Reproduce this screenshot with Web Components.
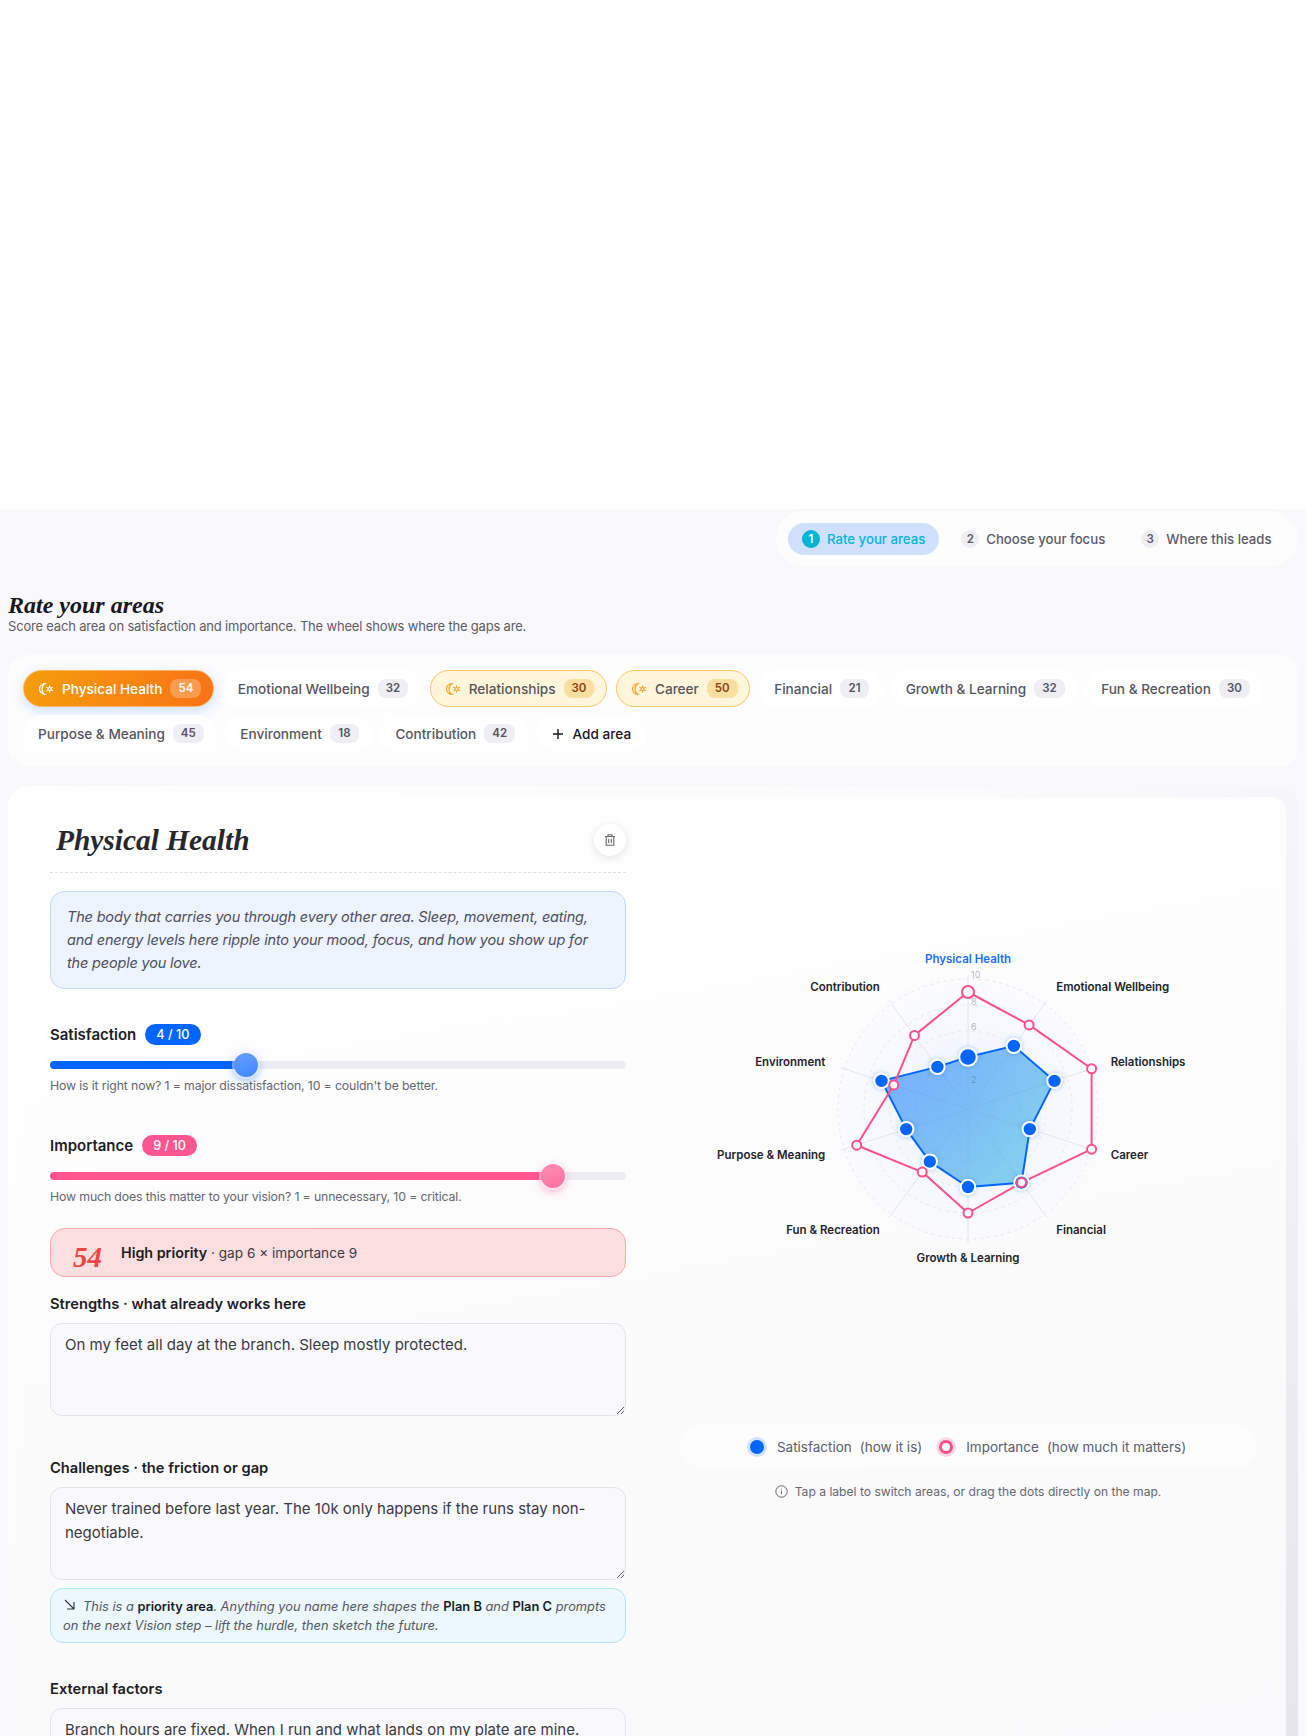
<!DOCTYPE html>
<html lang="en">
<head>
<meta charset="utf-8">
<title>Rate your areas</title>
<style>
  html, body { margin: 0; height: 1736px; overflow: hidden; background: #fff; }
  body { font-family: Inter, "Liberation Sans", sans-serif; color: #1f1f28; }
</style>
</head>
<body>
<rate-page>
  <step-bar>
    <step-item num="1" active>Rate your areas</step-item>
    <step-item num="2">Choose your focus</step-item>
    <step-item num="3">Where this leads</step-item>
  </step-bar>
  <page-heading heading="Rate your areas">Score each area on satisfaction and importance. The wheel shows where the gaps are.</page-heading>
  <chip-panel>
    <area-chip score="54" state="active">Physical Health</area-chip>
    <area-chip score="32">Emotional Wellbeing</area-chip>
    <area-chip score="30" state="warm">Relationships</area-chip>
    <area-chip score="50" state="warm">Career</area-chip>
    <area-chip score="21">Financial</area-chip>
    <area-chip score="32">Growth &amp; Learning</area-chip>
    <area-chip score="30">Fun &amp; Recreation</area-chip>
    <area-chip score="45">Purpose &amp; Meaning</area-chip>
    <area-chip score="18">Environment</area-chip>
    <area-chip score="42">Contribution</area-chip>
    <add-chip>Add area</add-chip>
  </chip-panel>
  <area-card>
    <area-editor slot="left">
      <editor-head>Physical Health</editor-head>
      <area-blurb>The body that carries you through every other area. Sleep, movement, eating, and energy levels here ripple into your mood, focus, and how you show up for the people you love.</area-blurb>
      <score-slider label="Satisfaction" value="4" tone="#0066ff" thumb="#3f86ff" style="margin-top:35px">How is it right now? 1 = major dissatisfaction, 10 = couldn't be better.</score-slider>
      <score-slider label="Importance" value="9" tone="#ff5590" thumb="#ff6f9f" style="margin-top:40px">How much does this matter to your vision? 1 = unnecessary, 10 = critical.</score-slider>
      <priority-note score="54"><b>High priority</b> · gap 6 × importance 9</priority-note>
      <note-field label="Strengths · what already works here" text="On my feet all day at the branch. Sleep mostly protected." style="margin-top:17px"></note-field>
      <note-field label="Challenges · the friction or gap" text="Never trained before last year. The 10k only happens if the runs stay non-negotiable." style="margin-top:42px"></note-field>
      <plan-hint>This is a <b>priority area</b>. Anything you name here shapes the <b>Plan B</b> and <b>Plan C</b> prompts on the next Vision step – lift the hurdle, then sketch the future.</plan-hint>
      <note-field label="External factors" text="Branch hours are fixed. When I run and what lands on my plate are mine." style="margin-top:36px"></note-field>
    </area-editor>
    <wheel-side slot="right">
      <radar-wheel></radar-wheel>
      <wheel-legend></wheel-legend>
    </wheel-side>
  </area-card>
</rate-page>

<script>
const SANS = 'Inter, "Liberation Sans", sans-serif';
const SERIF = '"Liberation Serif", serif';

// every element here is just a template in a shadow root
function makeTemplate(html) {
  const t = document.createElement("template");
  t.innerHTML = html;
  return t;
}

class Base extends HTMLElement {
  constructor() {
    super();
    const shadow = this.attachShadow({ mode: "open" });
    shadow.append(this.constructor.template.content.cloneNode(true));
  }
}

function simple(name, html) {
  const cls = class extends Base {};
  cls.template = makeTemplate(html);
  customElements.define(name, cls);
  return cls;
}

simple("rate-page", `
<style>
  :host { display: block; }
  .blank { height: 509px; background: #fff; }
  .page { background: #f9f9fb; padding: 2px 8px 0; height: 1227px; overflow: hidden; box-sizing: border-box; }
</style>
<div class="blank"></div>
<div class="page"><slot></slot></div>`);

simple("step-bar", `
<style>
  :host { display: flex; width: 522px; height: 55px; margin-left: auto; box-sizing: border-box;
    align-items: center; padding: 0 12px; gap: 8px; background: #fdfdfe; border-radius: 28px; }
</style>
<slot></slot>`);

class StepItem extends Base {
  connectedCallback() {
    this.shadowRoot.querySelector(".n").textContent = this.getAttribute("num");
  }
}
StepItem.template = makeTemplate(`
<style>
  :host { display: flex; align-items: center; gap: 7px; height: 32px; padding: 0 14px;
    border-radius: 16px; font: 500 13.2px ${SANS}; color: #5a5a68; white-space: nowrap; }
  :host([active]) { background: #cfe0fa; color: #06b4dc; }
  .n { width: 18px; height: 18px; border-radius: 50%; background: #eeeef3; font-size: 11.5px; font-weight: 600;
    display: grid; place-items: center; }
  :host([active]) .n { background: #00b4d8; color: #fff; }
</style>
<span class="n"></span><slot></slot>`);
customElements.define("step-item", StepItem);

class PageHeading extends Base {
  connectedCallback() {
    this.shadowRoot.querySelector("h1").textContent = this.getAttribute("heading");
  }
}
PageHeading.template = makeTemplate(`
<style>
  :host { display: block; margin-top: 25px; }
  h1 { margin: 0; font: italic 700 24px/28px ${SERIF}; color: #17171d; }
  p { margin: -2px 0 0; font: 400 13px/18px ${SANS}; letter-spacing: -.19px; color: #5c5c6b; }
</style>
<h1></h1><p><slot></slot></p>`);
customElements.define("page-heading", PageHeading);

simple("chip-panel", `
<style>
  :host { display: flex; flex-wrap: wrap; gap: 8px 9px; margin-top: 20px; padding: 15px;
    background: #fdfdfe; border-radius: 20px; }
</style>
<slot></slot>`);

const moonSun = `<svg width="16" height="16" viewBox="0 0 16 16" fill="none" stroke="currentColor" stroke-width="1.2" stroke-linecap="round">
  <path d="M7 2.5A5.5 5.5 0 1 0 7 13.5A6.5 6.5 0 0 1 7 2.5Z"/>
  <circle cx="11.6" cy="8" r="1.5"/>
  <path d="M11.6 4.9v.7M11.6 10.4v.7M8.9 6.4l.6.4M13.7 9.2l.6.4M8.9 9.6l.6-.4M13.7 6.8l.6-.4"/>
</svg>`;

class AreaChip extends Base {
  connectedCallback() {
    this.shadowRoot.querySelector(".score").textContent = this.getAttribute("score");
    const state = this.getAttribute("state");
    if (state) this.shadowRoot.querySelector(".icon").innerHTML = moonSun;
    else this.shadowRoot.querySelector(".icon").remove();
  }
}
AreaChip.template = makeTemplate(`
<style>
  :host { display: inline-flex; align-items: center; gap: 8px; height: 37px; padding: 0 11.5px 0 14px;
    box-sizing: border-box; border-radius: 19px; background: #fff; border: 1px solid transparent;
    font: 500 13.6px ${SANS}; color: #55555f; white-space: nowrap; }
  :host([state=warm]) { background: #fff6dc; border-color: #fcc767; }
  :host([state=active]) { background: linear-gradient(100deg, #f59e0b, #f97316); border-color: #fbb560;
    color: #fff; box-shadow: 0 4px 14px rgba(0, 102, 255, .2); }
  .icon { display: flex; color: #f5a524; }
  :host([state=active]) .icon { color: #fff; }
  .score { min-width: 13px; text-align: center; height: 19px; line-height: 19px; padding: 0 8px; border-radius: 8px;
    background: #eeeef3; font-size: 11.5px; font-weight: 600; color: #55555f; }
  :host([state=warm]) .score { background: #fbdf9f; color: #92400e; }
  :host([state=active]) .score { background: rgba(255, 255, 255, .25); color: #fff; }
</style>
<span class="icon"></span><slot></slot><span class="score"></span>`);
customElements.define("area-chip", AreaChip);

simple("add-chip", `
<style>
  :host { display: inline-flex; align-items: center; gap: 9px; height: 37px; padding: 0 13px 0 15px;
    box-sizing: border-box; border-radius: 19px; background: #fff; font: 500 13.6px ${SANS}; color: #17171d; }
</style>
<svg width="12" height="12" viewBox="0 0 12 12" fill="none" stroke="currentColor" stroke-width="1.4"><path d="M6 1v10M1 6h10"/></svg><slot></slot>`);

simple("area-card", `
<style>
  :host { display: block; margin-top: 19px; padding: 11px 12px 0; border-radius: 20px 20px 0 0; height: 1000px;
    background: linear-gradient(135deg, #fff 0%, #fbfbfd 42%, #f6f6fa 58%, #e5e4eb 100%); }
  .inner { display: grid; grid-template-columns: 576px 576px; gap: 54px; padding: 24px 30px 0; height: 100%;
    border-radius: 14px 14px 0 0; background: linear-gradient(170deg, #fff 0%, #fbfbfc 60%, #f9f9fb 100%); }
</style>
<div class="inner"><slot name="left"></slot><slot name="right"></slot></div>`);

simple("area-editor", `<style>:host { display: block; }</style><slot></slot>`);

simple("editor-head", `
<style>
  :host { display: flex; align-items: center; justify-content: space-between; padding: 3px 0 16px;
    border-bottom: 1px dashed #dfdfe6; }
  h2 { margin: 1px 0 0 6px; font: italic 700 29.4px/31px ${SERIF}; color: #27272e; }
  button { width: 32px; height: 32px; border: 0; border-radius: 50%; background: #fff; display: grid; place-items: center;
    box-shadow: 0 2px 8px rgba(30, 30, 60, .13); padding: 0; color: #66666f; }
</style>
<h2><slot></slot></h2>
<button aria-label="Delete area"><svg width="14" height="14" viewBox="0 0 14 14" fill="none" stroke="currentColor" stroke-width="1.1">
  <path d="M2 3.5h10M5 3.5V1.7h4v1.8M3.2 3.5v8.8h7.6V3.5M5.7 5.7v4.5M8.3 5.7v4.5"/></svg></button>`);

simple("area-blurb", `
<style>
  :host { display: block; margin-top: 18px; padding: 13px 16px 14px; border: 1px solid #bfd8fd; border-radius: 14px;
    background: #eef4fe; font: italic 400 14.5px/23px ${SANS}; letter-spacing: -.18px; color: #4f4f5c; }
</style>
<slot></slot>`);

class ScoreSlider extends Base {
  connectedCallback() {
    const v = +this.getAttribute("value");
    const r = this.shadowRoot;
    r.querySelector(".name").textContent = this.getAttribute("label");
    r.querySelector(".pill").textContent = v + " / 10";
    const input = r.querySelector("input");
    input.value = v;
    this.style.setProperty("--tone", this.getAttribute("tone"));
    this.style.setProperty("--thumb", this.getAttribute("thumb"));
    // native thumb stays inside the track, so centre = 12 + (v-1)/9 * (576-24)
    this.style.setProperty("--fill", (12 + (v - 1) / 9 * 552) + "px");
  }
}
ScoreSlider.template = makeTemplate(`
<style>
  :host { display: block; }
  .top { display: flex; align-items: center; gap: 9px; height: 21px; font: 600 15px ${SANS}; color: #1d1d25; }
  .pill { height: 21px; line-height: 21px; padding: 0 11px; border-radius: 11px; background: var(--tone); color: #fff;
    font-size: 12.7px; font-weight: 500; }
  input { -webkit-appearance: none; appearance: none; display: block; width: 100%; height: 8px; margin: 16px 0 0; border-radius: 4px;
    background: linear-gradient(to right, var(--tone) var(--fill), #ecedf2 var(--fill)); }
  input::-webkit-slider-thumb { -webkit-appearance: none; width: 24px; height: 24px; border-radius: 50%; border: 0;
    background: linear-gradient(160deg, color-mix(in srgb, var(--thumb) 80%, #fff), var(--thumb));
    box-shadow: 0 0 0 2px rgba(255,255,255,.45), 0 3px 10px color-mix(in srgb, var(--tone) 50%, transparent); }
  p { margin: 8px 0 0; font: 400 12.3px/18px ${SANS}; letter-spacing: -.14px; color: #666672; }
</style>
<div class="top"><span class="name"></span><span class="pill"></span></div>
<input type="range" min="1" max="10" step="1">
<p><slot></slot></p>`);
customElements.define("score-slider", ScoreSlider);

class PriorityNote extends Base {
  connectedCallback() {
    this.shadowRoot.querySelector(".n").textContent = this.getAttribute("score");
  }
}
PriorityNote.template = makeTemplate(`
<style>
  :host { display: flex; align-items: center; gap: 19px; margin-top: 22px; height: 49px; box-sizing: border-box;
    padding: 0 22px; border: 1px solid #f9a8a8; border-radius: 15px; background: #fbdfe0;
    font: 400 13.6px ${SANS}; color: #3a3a44; }
  .n { font: italic 700 29px/32px ${SERIF}; color: #ef4444; padding-top: 9px; }
  ::slotted(b) { font-size: 14.3px; font-weight: 600; color: #1d1d25; }
</style>
<span class="n"></span><span><slot></slot></span>`);
customElements.define("priority-note", PriorityNote);

class NoteField extends Base {
  connectedCallback() {
    const r = this.shadowRoot;
    r.querySelector("label").textContent = this.getAttribute("label");
    r.querySelector("textarea").textContent = this.getAttribute("text");
  }
}
NoteField.template = makeTemplate(`
<style>
  :host { display: block; font-size: 0; }
  label { display: block; font: 600 14.7px/20px ${SANS}; color: #1d1d25; margin-bottom: 9px; }
  textarea { display: block; width: 100%; height: 93px; box-sizing: border-box; margin: 0; padding: 9px 14px;
    border: 1px solid #e3e3ea; border-radius: 12px; background: #f9f9fb; outline: 0;
    font: 400 15px/24px ${SANS}; color: #3a3a44; }
</style>
<label></label>
<textarea></textarea>`);
customElements.define("note-field", NoteField);

simple("plan-hint", `
<style>
  :host { display: block; margin-top: 8px; padding: 8px 12px; height: 55px; box-sizing: border-box;
    border: 1px solid #aee5f3; border-radius: 13px; background: #ecf8fb;
    font: italic 400 12.85px/19px ${SANS}; color: #565662; }
  svg { margin: 0 8px 0 1px; vertical-align: 1px; }
  ::slotted(b) { font-style: normal; font-weight: 600; color: #1d1d25; }
</style>
<svg width="11" height="11" viewBox="0 0 11 11" fill="none" stroke="#33333c" stroke-width="1.1"><path d="M1 1l9 9M10 3v7H3"/></svg><slot></slot>`);

simple("wheel-side", `
<style>:host { display: block; }</style><slot></slot>`);

const AREAS = [
  ["Physical Health", 4, 9], ["Emotional Wellbeing", 6, 8], ["Relationships", 7, 10], ["Career", 5, 10],
  ["Financial", 7, 7], ["Growth & Learning", 6, 8], ["Fun & Recreation", 5, 6], ["Purpose & Meaning", 5, 9],
  ["Environment", 7, 6], ["Contribution", 4, 7],
];
const UNIT = 13;

function pt(i, r) {
  const a = (i * 36) * Math.PI / 180;
  return [(r * Math.sin(a)).toFixed(1), (-r * Math.cos(a)).toFixed(1)];
}

class RadarWheel extends HTMLElement {
  constructor() {
    super();
    const shadow = this.attachShadow({ mode: "open" });
    let rings = "", axes = "", labels = "", blue = "", pink = "", ticks = "";
    for (let v = 2; v <= 10; v += 2) {
      rings += `<circle r="${v * UNIT}" fill="none" stroke="#e6e7ef" stroke-dasharray="3 4"/>`;
    }
    [[10, -133], [8, -106], [6, -81], [2, -28]].forEach(([v, y]) => {
      ticks += `<text x="3" y="${y}" class="tick">${v}</text>`;
    });
    AREAS.forEach(([name, s, im], i) => {
      const [ax, ay] = pt(i, 134);
      axes += `<line x2="${ax}" y2="${ay}" stroke="#e5e6ed"/>`;
      const [lx, ly] = pt(i, i === 0 ? 149 : 150);
      const anchor = Math.abs(lx) < 1 ? "middle" : lx > 0 ? "start" : "end";
      labels += `<text x="${lx}" y="${ly}" text-anchor="${anchor}" class="lab${i === 0 ? " on" : ""}">${name.replace("&", "&amp;")}</text>`;
      const [bx, by] = pt(i, s * UNIT);
      const [px, py] = pt(i, im * UNIT);
      blue += `<circle cx="${bx}" cy="${by}" r="${i === 0 ? 8.8 : 7.2}" fill="#0066ff" stroke="#fff" stroke-width="2" filter="url(#glow)"/>`;
      pink += `<circle cx="${px}" cy="${py}" r="${i === 0 ? 6 : 4.5}" fill="#fff" stroke="#ff4f8b" stroke-width="2"/>`;
    });
    const poly = (k) => AREAS.map((a, i) => pt(i, a[k] * UNIT).join(",")).join(" ");
    shadow.innerHTML = `
<style>
  :host { display: block; height: 576px; }
  svg { display: block; }
  .lab { font: 600 11.5px ${SANS}; fill: #24242c; dominant-baseline: middle; }
  .lab.on { fill: #1a6dff; }
  .tick { font: 400 9px ${SANS}; fill: rgba(90, 90, 110, .45); dominant-baseline: middle; }
</style>
<svg width="576" height="576" viewBox="-288 -288 576 576">
  <defs>
    <radialGradient id="bg"><stop offset="0" stop-color="#0066ff" stop-opacity=".07"/><stop offset="1" stop-color="#0066ff" stop-opacity="0"/></radialGradient>
    <linearGradient id="fill" gradientUnits="userSpaceOnUse" x1="-100" y1="-40" x2="30" y2="70">
      <stop offset="0" stop-color="#0066ff"/><stop offset="1" stop-color="#1fa7e3"/>
    </linearGradient>
    <filter id="glow" x="-60%" y="-60%" width="220%" height="220%"><feDropShadow dx="0" dy="0" stdDeviation="2.5" flood-color="#0066ff" flood-opacity=".35"/></filter>
  </defs>
  <circle r="140" fill="url(#bg)"/>
  ${rings}${axes}
  <polygon points="${poly(1)}" fill="url(#fill)" fill-opacity=".52" stroke="#0066ff" stroke-width="2" stroke-linejoin="round"/>
  ${ticks}
  <polygon points="${poly(2)}" fill="none" stroke="#ff4f8b" stroke-width="2" stroke-linejoin="round"/>
  ${blue}${pink}${labels}
</svg>`;
  }
}
customElements.define("radar-wheel", RadarWheel);

simple("wheel-legend", `
<style>
  :host { display: block; margin-top: 28px; font: 400 13.5px ${SANS}; color: #5c5c6b; }
  .pill { display: flex; align-items: center; justify-content: center; height: 43px; border-radius: 22px; background: #fdfdfe; white-space: nowrap; }
  .dot { width: 14px; height: 14px; border-radius: 50%; box-sizing: border-box; margin-right: 13px; }
  .sat { background: #0066ff; box-shadow: 0 0 0 3px #d2e2fd; }
  .imp { background: #fff; border: 3px solid #ff4f8b; box-shadow: 0 0 0 3px #fdd8e5; margin-left: 17px; }
  .sub { margin-left: 8px; }
  .tip { display: flex; align-items: center; justify-content: center; gap: 7px; margin-top: 14px; height: 18px; font-size: 12.1px; color: #666672; }
</style>
<div class="pill">
  <span class="dot sat"></span><span>Satisfaction</span><span class="sub">(how it is)</span>
  <span class="dot imp"></span><span>Importance</span><span class="sub">(how much it matters)</span>
</div>
<div class="tip">
  <svg width="13" height="13" viewBox="0 0 13 13" fill="none" stroke="currentColor" stroke-width="1"><circle cx="6.5" cy="6.5" r="5.7"/><path d="M6.5 5.8v3.4M6.5 3.7v.9"/></svg>
  <span>Tap a label to switch areas, or drag the dots directly on the map.</span>
</div>`);
</script>
</body>
</html>
